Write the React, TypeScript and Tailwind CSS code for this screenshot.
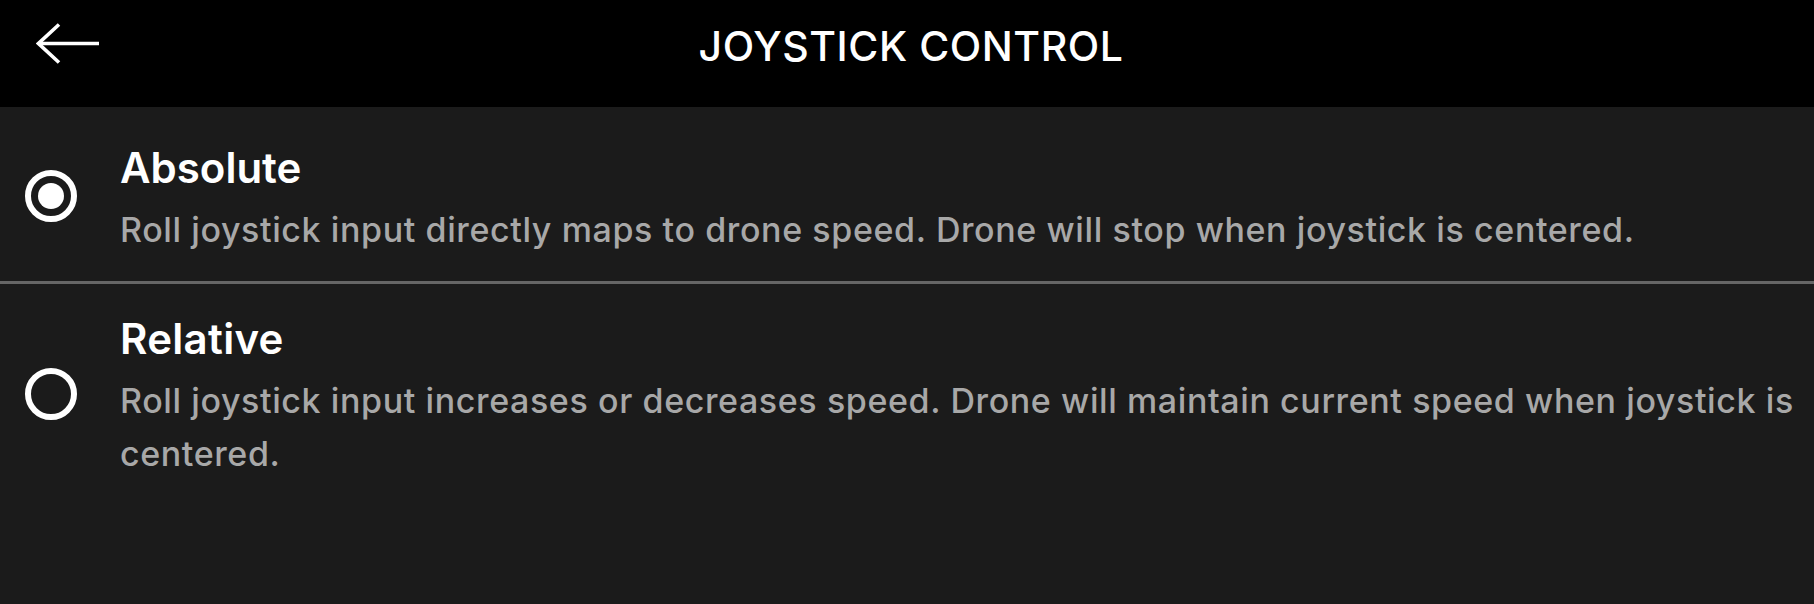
export default function App() {
  return (
    <main className="w-full min-h-[604px] bg-[#1b1b1b] text-white font-['Inter',sans-serif]">
      {/* Header */}
      <header className="relative h-[107px] bg-black flex items-center justify-center">
        <button className="absolute left-[36px] top-[23px] w-[64px] h-[42px]" aria-label="Back">
          <svg width="64" height="42" viewBox="0 0 64 42" fill="none" stroke="white" strokeWidth="3.6">
            <path d="M63 20.5H2.5" />
            <path d="M23 1.5L2.5 20.5L23 39.5" />
          </svg>
        </button>
        <h1 className="text-[41px] leading-none font-medium tracking-[0.55px] mt-[-14px] ml-[8px]">JOYSTICK CONTROL</h1>
      </header>

      {/* Options */}
      <section>
        <div className="flex items-center border-b-[3px] border-[#666666] pt-[35px] pb-[25px]">
          <div className="ml-[25px] mr-[43px] w-[52px] h-[52px] shrink-0 rounded-full border-[6px] border-white flex items-center justify-center -mt-[6px]">
            <div className="w-[26px] h-[26px] rounded-full bg-white" />
          </div>
          <div>
            <div className="text-[42px] leading-[52px] font-semibold">Absolute</div>
            <p className="mt-[9px] text-[34px] leading-[53px] font-medium tracking-[0.6px] text-[#a8a8a8]">
              Roll joystick input directly maps to drone speed. Drone will stop when joystick is centered.
            </p>
          </div>
        </div>

        <div className="flex items-center pt-[29px] pr-[16px]">
          <div className="ml-[25px] mr-[43px] w-[52px] h-[52px] shrink-0 rounded-full border-[6px] border-white -mt-[6px]" />
          <div>
            <div className="text-[42px] leading-[52px] font-semibold tracking-[0.3px]">Relative</div>
            <p className="mt-[9px] text-[34px] leading-[53px] font-medium tracking-[0.6px] text-[#a8a8a8]">
              Roll joystick input increases or decreases speed. Drone will maintain current speed when joystick is centered.
            </p>
          </div>
        </div>
      </section>
    </main>
  );
}
